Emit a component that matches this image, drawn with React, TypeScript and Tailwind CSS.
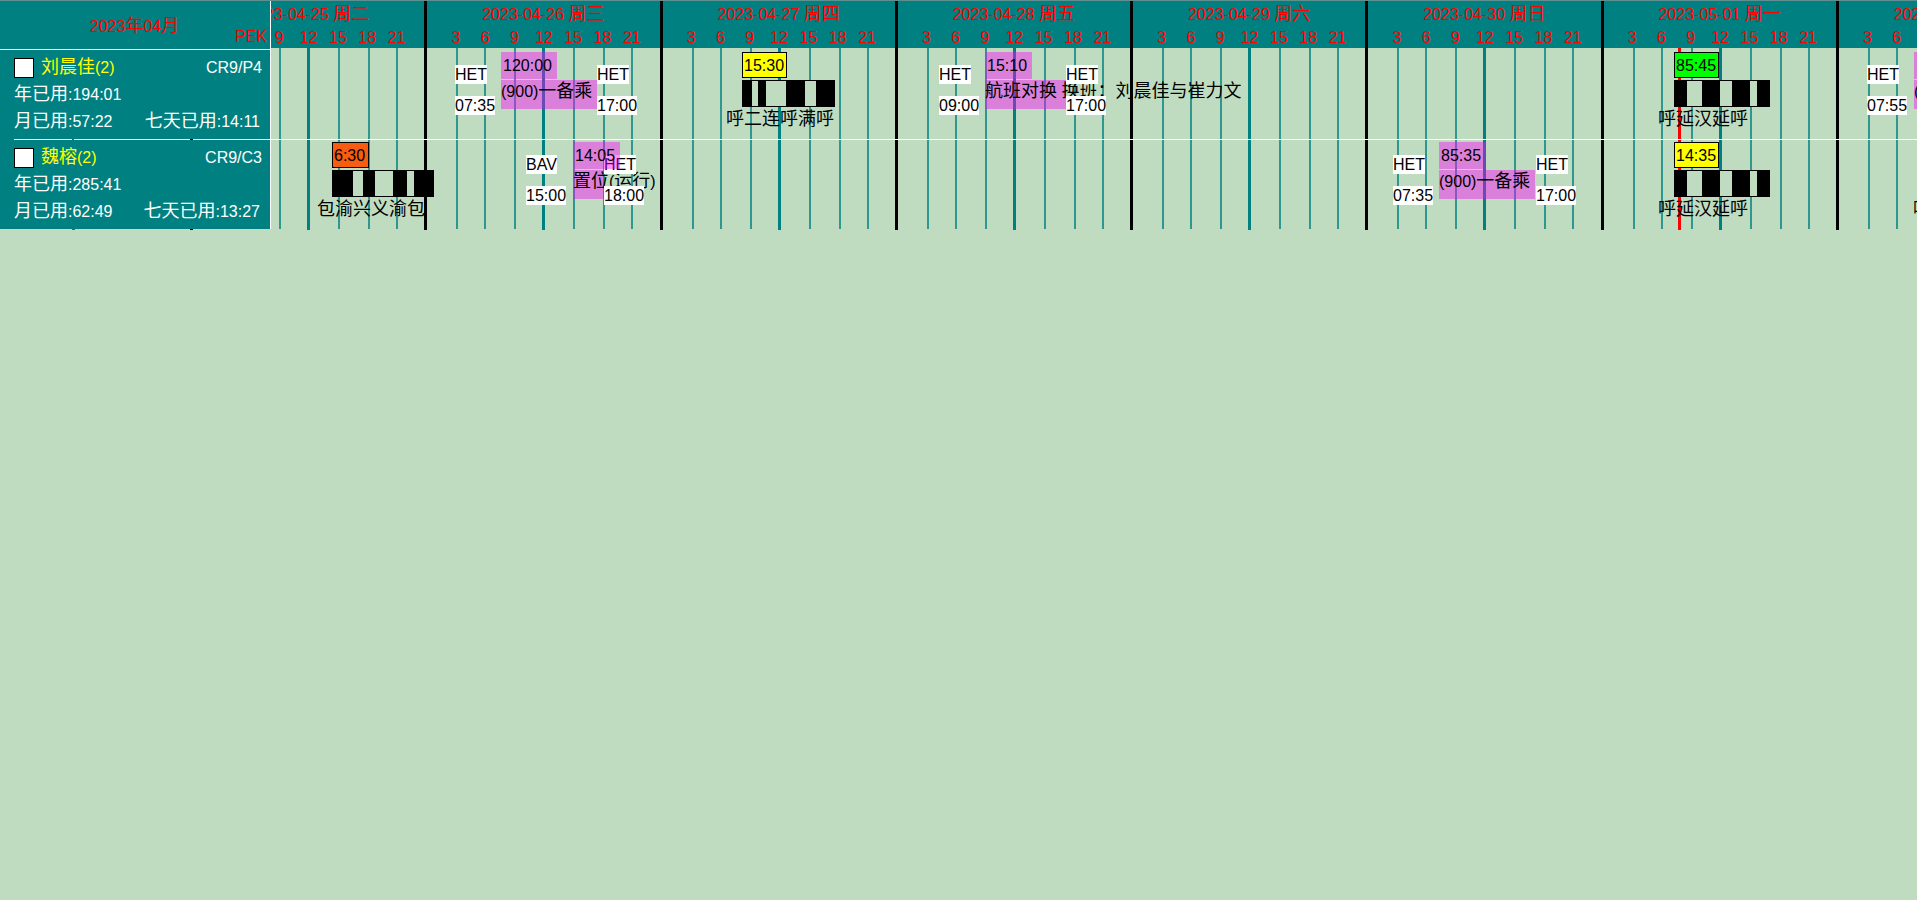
type Tone = "magenta" | "yellow" | "green" | "orange";

type Duty = {
  x: number;
  tag?: { text: string; w: number; tone: Tone };
  bar?: { text: string; w: number };
  legs?: { w: number; flights: [number, number][] };
  route?: { text: string; x: number };
  from?: { x: number; code: string; time: string };
  to?: { x: number; code: string; time: string };
};

type Crew = {
  name: string;
  rank: string;
  year: string;
  month: string;
  week: string;
  duties: Duty[];
};

const DAYS = [
  "2023-04-25 周二",
  "2023-04-26 周三",
  "2023-04-27 周四",
  "2023-04-28 周五",
  "2023-04-29 周六",
  "2023-04-30 周日",
  "2023-05-01 周一",
  "2023-05-02 周二",
];

const HOURS = [3, 6, 9, 12, 15, 18, 21];

const YANAN_LEGS: [number, number][] = [[0, 13], [28, 18], [58, 18], [83, 13]];

const CREWS: Crew[] = [
  {
    name: "刘晨佳(2)",
    rank: "CR9/P4",
    year: "194:01",
    month: "57:22",
    week: "14:11",
    duties: [
      {
        x: 312,
        tag: { text: "120:00", w: 56, tone: "magenta" },
        bar: { text: "(900)一备乘", w: 96 },
        from: { x: 266, code: "HET", time: "07:35" },
        to: { x: 408, code: "HET", time: "17:00" },
      },
      {
        x: 553,
        tag: { text: "15:30", w: 45, tone: "yellow" },
        legs: { w: 93, flights: [[0, 10], [16, 8], [44, 19], [74, 19]] },
        route: { text: "呼二连呼满呼", x: 537 },
      },
      {
        x: 796,
        tag: { text: "15:10", w: 47, tone: "magenta" },
        bar: { text: "航班对换 换班：刘晨佳与崔力文", w: 81 },
        from: { x: 750, code: "HET", time: "09:00" },
        to: { x: 877, code: "HET", time: "17:00" },
      },
      {
        x: 1485,
        tag: { text: "85:45", w: 45, tone: "green" },
        legs: { w: 96, flights: YANAN_LEGS },
        route: { text: "呼延汉延呼", x: 1469 },
      },
      {
        x: 1725,
        tag: { text: "120:00", w: 56, tone: "magenta" },
        bar: { text: "(900)一备乘", w: 96 },
        from: { x: 1678, code: "HET", time: "07:55" },
      },
    ],
  },
  {
    name: "魏榕(2)",
    rank: "CR9/C3",
    year: "285:41",
    month: "62:49",
    week: "13:27",
    duties: [
      {
        x: 143,
        tag: { text: "6:30", w: 37, tone: "orange" },
        legs: { w: 102, flights: [[0, 21], [31, 12], [61, 14], [82, 20]] },
        route: { text: "包渝兴义渝包", x: 128 },
      },
      {
        x: 384,
        tag: { text: "14:05", w: 47, tone: "magenta" },
        bar: { text: "置位(运行)", w: 31 },
        from: { x: 337, code: "BAV", time: "15:00" },
        to: { x: 415, code: "HET", time: "18:00" },
      },
      {
        x: 1250,
        tag: { text: "85:35", w: 47, tone: "magenta" },
        bar: { text: "(900)一备乘", w: 96 },
        from: { x: 1204, code: "HET", time: "07:35" },
        to: { x: 1347, code: "HET", time: "17:00" },
      },
      {
        x: 1485,
        tag: { text: "14:35", w: 45, tone: "yellow" },
        legs: { w: 96, flights: YANAN_LEGS },
        route: { text: "呼延汉延呼", x: 1469 },
      },
      { x: 1740, route: { text: "呼延汉延呼", x: 1724 } },
    ],
  },
];

const TONES: Record<Tone, string> = {
  magenta: "h-[27px] bg-[#ff00ff]/42 px-[2px] leading-[27px]",
  yellow: "h-[26px] border border-black bg-[#ffff00] px-px leading-[25px]",
  green: "h-[26px] border border-black bg-[#00ff00] px-px leading-[25px]",
  orange: "h-[26px] border border-black bg-[#f85c10] px-px leading-[25px]",
};

/* Han characters are set two pixels larger than Latin letters and digits. */
function Mixed({ text }: { text: string }) {
  return text
    .split(/([^\x00-\x7f]+)/)
    .filter(Boolean)
    .map((run, i) =>
      run.charCodeAt(0) > 127 ? (
        <span key={i} className="text-[18px] leading-0">
          {run}
        </span>
      ) : (
        run
      ),
    );
}

function Station({ x, code, time }: { x: number; code: string; time: string }) {
  return (
    <div className="absolute top-[17px] flex flex-col items-start gap-3" style={{ left: x }}>
      <span className="h-[19px] bg-white leading-5">{code}</span>
      <span className="h-[19px] bg-white leading-5">{time}</span>
    </div>
  );
}

function DutyItem({ duty }: { duty: Duty }) {
  const { x, tag, bar, legs, route, from, to } = duty;
  return (
    <>
      {bar && (
        <div
          className="absolute top-8 h-[29px] bg-[#ff00ff]/42 leading-6"
          style={{ left: x, width: bar.w }}
        >
          <Mixed text={bar.text} />
        </div>
      )}
      {legs && (
        <div
          className="absolute top-8 h-[27px] border-y border-r border-black bg-[#c0dcc0]"
          style={{ left: x, width: legs.w }}
        >
          {legs.flights.map(([start, w]) => (
            <div key={start} className="absolute inset-y-0 bg-black" style={{ left: start, width: w }} />
          ))}
        </div>
      )}
      {route && (
        <div className="absolute top-[60px] leading-6" style={{ left: route.x }}>
          <Mixed text={route.text} />
        </div>
      )}
      {from && <Station {...from} />}
      {to && <Station {...to} />}
      {tag && (
        <div className={`absolute top-1 ${TONES[tag.tone]}`} style={{ left: x, width: tag.w }}>
          {tag.text}
        </div>
      )}
    </>
  );
}

function DayColumn({ label }: { label: string }) {
  return (
    <div className="flex flex-col border-l-3 border-black">
      <div className="flex h-12 flex-col bg-[#008080] pt-[3px] text-center text-[#ff0000]">
        <div className="leading-6">
          <Mixed text={label} />
        </div>
        <div className="grid grid-cols-7 pr-[13px] pl-[14px] leading-[22px]">
          {HOURS.map((h) => (
            <span key={h} className="flex justify-center">
              {h}
            </span>
          ))}
        </div>
      </div>
      <div className="grid flex-1 grid-cols-[29px_28px_30px_28px_31px_30px_28px_1fr] pb-px">
        <span />
        {HOURS.map((h) => (
          <span
            key={h}
            className={h === 12 ? "-mb-px border-l-3 border-[#008080]" : "border-l-2 border-[#008080]/75"}
          />
        ))}
      </div>
    </div>
  );
}

function CrewCard({ crew, index }: { crew: Crew; index: number }) {
  const id = `crew-${index}`;
  return (
    <section className="relative flex h-[90px] flex-col pt-[6px] pr-2 pl-[14px] leading-[27px] text-white">
      {index > 0 && (
        <div className="absolute top-px right-0 left-[14px] flex h-px">
          <span className="w-[58px] bg-white" />
          <span className="ml-[2px] w-[116px] bg-white" />
          <span className="w-[3px] bg-black" />
          <span className="flex-1 bg-white" />
        </div>
      )}
      <div className="flex items-center">
        <input
          id={id}
          type="checkbox"
          className="size-5 appearance-none border border-black bg-white checked:bg-black"
        />
        <label htmlFor={id} className="ml-[7px] flex-1 text-[#ffff00]">
          <Mixed text={crew.name} />
        </label>
        <span>{crew.rank}</span>
      </div>
      <div>
        <Mixed text={`年已用:${crew.year}`} />
      </div>
      <div className="flex justify-between pr-[2px]">
        <span>
          <Mixed text={`月已用:${crew.month}`} />
        </span>
        <span>
          <Mixed text={`七天已用:${crew.week}`} />
        </span>
      </div>
    </section>
  );
}

export default function App() {
  return (
    <main className="relative min-h-screen overflow-hidden bg-[#c0dcc0] font-['Liberation_Sans','Noto_Sans_CJK_SC',sans-serif] text-base whitespace-nowrap text-black">
      <div className="absolute inset-x-0 top-0 z-10 h-px bg-[#5f9090]" />
      <div className="flex">
        <aside className="w-[271px] shrink-0">
          <div className="border-r border-white bg-[#008080] pb-px">
            <header className="flex h-[50px] flex-col border-b border-white pt-[14px] text-center text-[#ff0000]">
              <h1 className="pr-px leading-[26px]">
                <Mixed text="2023年04月" />
              </h1>
              <span className="-mt-4 pr-[3px] text-right leading-[26px]">PEK</span>
            </header>
            <div className="-mt-[2px]">
              {CREWS.map((crew, i) => (
                <CrewCard key={crew.name} crew={crew} index={i} />
              ))}
            </div>
          </div>
          <div className="flex h-px gap-[115px] pl-[72px]">
            <span className="w-[3px] bg-[#008080]" />
            <span className="w-[3px] bg-black" />
          </div>
        </aside>
        <div className="min-w-0 flex-1 overflow-hidden">
          <div className="relative -ml-[82px] grid h-[230px] w-[1882px] grid-cols-8">
            {DAYS.map((d) => (
              <DayColumn key={d} label={d} />
            ))}
            <div className="absolute inset-x-0 top-12 bottom-0">
              <div className="absolute inset-y-0 left-[1489px] w-[3px] bg-[#ff0000]" />
              {CREWS.map((crew, i) => (
                <div key={crew.name} className="relative h-[90px]">
                  {i > 0 && <div className="absolute inset-x-0 top-px h-px bg-white" />}
                  {crew.duties.map((duty) => (
                    <DutyItem key={duty.x} duty={duty} />
                  ))}
                </div>
              ))}
            </div>
          </div>
        </div>
      </div>
    </main>
  );
}
